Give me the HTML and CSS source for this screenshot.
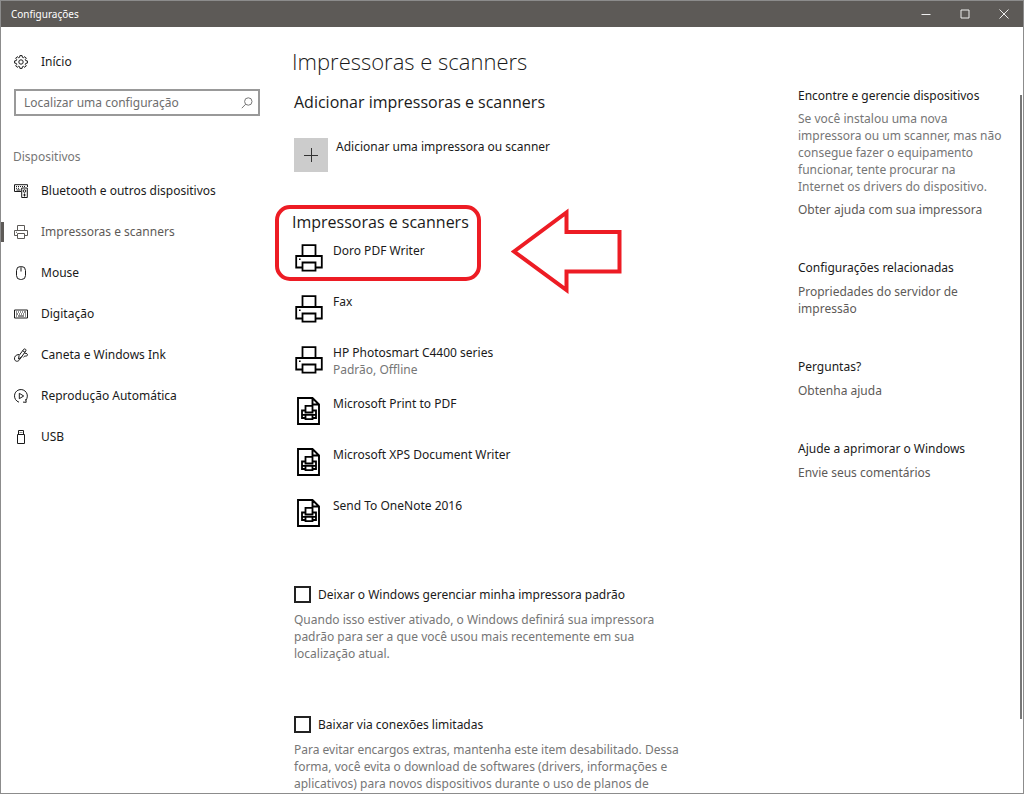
FILE: index.html
```html
<!DOCTYPE html>
<html lang="pt-BR">
<head>
<meta charset="utf-8">
<title>Configurações</title>
<link rel="stylesheet" href="styles.css">
</head>
<body>
<svg class="defs" aria-hidden="true">
  <symbol id="printer" viewBox="0 0 28 28">
    <g fill="none" stroke="currentColor" stroke-width="1.8">
      <path d="M7.5 12V1.2h13V12"/>
      <path d="M7.5 23.5H1.2V12h25.6v11.500h-6.300"/>
      <path d="M7.500 18.500h13v8.200h-13z"/>
    </g>
    <path d="M4 14.500h1.600v1.600H4z" fill="currentColor"/>
  </symbol>
  <symbol id="docprinter" viewBox="0 0 28 28">
    <g fill="none" stroke="currentColor">
      <path stroke-width="1.900" d="M3 1h14.500l6.500 6.500V27H3zM17.500 1v6.500H24"/>
      <path stroke-width="1.800" d="M10.500 15.500V8.800h7v6.700zM10.500 21H7V13.500h3.500M17.500 13.500H21V21h-3.500M7 17.800h14M10.500 18v4.200h7V18"/>
    </g>
  </symbol>
</svg>
<div class="window">
  <header class="titlebar">
    <span class="caption">Configurações</span>
    <div class="controls">
      <button class="control" type="button" aria-label="Minimizar"><svg width="10" height="10" viewBox="0 0 10 10"><path d="M0.500 5.500h9"/></svg></button>
      <button class="control" type="button" aria-label="Maximizar"><svg width="10" height="10" viewBox="0 0 10 10"><path d="M1 1h8v8H1z"/></svg></button>
      <button class="control" type="button" aria-label="Fechar"><svg width="10" height="10" viewBox="0 0 10 10"><path d="M0.500 0.500l9 9M9.500 0.500l-9 9"/></svg></button>
    </div>
  </header>
  <div class="body">
    <nav class="sidebar">
      <a class="item" href="#"><svg class="icon" viewBox="0 0 14 14"><circle cx="7" cy="7" r="2.200"/><path d="M5.900 0.600h2.200l.3 1.700 1 .4 1.400-1 1.500 1.500-1 1.400.4 1 1.700.3v2.200l-1.700.3-.4 1 1 1.400-1.500 1.500-1.400-1-1 .4-.3 1.700H5.900l-.3-1.700-1-.4-1.400 1-1.500-1.500 1-1.400-.4-1-1.700-.3V5.900l1.700-.3.4-1-1-1.400 1.500-1.500 1.400 1 1-.4z"/></svg>Início</a>
      <div class="search">
        <input class="query" type="text" aria-label="Localizar uma configuração" placeholder="Localizar uma configuração">
        <svg class="lens" viewBox="0 0 12 12"><circle cx="7.300" cy="4.500" r="3.700"/><path d="M4.700 7.200L0.800 11.200"/></svg>
      </div>
      <h2 class="group">Dispositivos</h2>
      <a class="item" href="#"><svg class="icon" viewBox="0 0 14 14"><path d="M7 7.500H0.500V0.700h13v2.300M2 2.500h1m1 0h1m1 0h1m1 0h1m1 0h1M2 4.300h1m1 0h1M2.500 6h4M7.700 4h5.600v9.500H7.700z"/><circle cx="10.500" cy="7" r="1.300"/><path d="M10.500 9.500v3M9.300 11h2.400"/></svg>Bluetooth e outros dispositivos</a>
      <a class="item current" href="#" aria-current="page"><svg class="icon" viewBox="0 0 14 14"><path d="M3.500 5.500V0.500h7v5M3.500 10.500h-3v-5h13v5h-3M3.500 8.500h7v5h-7zM2 7.300h1"/></svg>Impressoras e scanners</a>
      <a class="item" href="#"><svg class="icon" viewBox="0 0 14 14"><rect x="2.500" y="0.500" width="9" height="13" rx="4"/><path d="M7 1v4.500"/></svg>Mouse</a>
      <a class="item" href="#"><svg class="icon" viewBox="0 0 14 14"><path d="M0.500 3h13v8h-13z"/><path d="M2 5h1m1 0h1m1 0h1m1 0h1m1 0h2M2 7h2m1 0h1m1 0h1m1 0h1m1 0h1M2 9h1m1 0h6m1 0h1"/></svg>Digitação</a>
      <a class="item" href="#"><svg class="icon" viewBox="0 0 14 14"><path d="M4.500 11l.6-3.500 4.600-6.200c.9-1 2.900.2 2.200 1.500L7.500 9zM8.700 2.700l2.200 1.500M5 6.500C1.800 6.600.2 8.800.5 11c.3 2.700 3.800 3 4.900.8L7.800 8.500M10.500 5.300c3.300-.5 3.900 2.500 1.800 2.700-1.500.1-2.200.1-2.800 1.400"/></svg>Caneta e Windows Ink</a>
      <a class="item" href="#"><svg class="icon" viewBox="0 0 14 14"><path d="M5 13.200C-1.200 11-.8 2.500 5 .8c6-1.700 11 5 6.800 10.600M9 13.100l3.200.2-.4-3.200M5.300 4.300v5.400L9.700 7z"/></svg>Reprodução Automática</a>
      <a class="item" href="#"><svg class="icon" viewBox="0 0 14 14"><path d="M3.500 4.500h7v9h-7zM4.500 4.500v-4h5v4M5.700 2.500h.8m1 0h.8"/></svg>USB</a>
    </nav>
    <main class="content">
      <h1 class="title">Impressoras e scanners</h1>
      <h2 class="heading">Adicionar impressoras e scanners</h2>
      <button class="add" type="button"><span class="plus"><svg width="14" height="14" viewBox="0 0 14 14"><path d="M0 7.500h14M7.500 0v14"/></svg></span><span>Adicionar uma impressora ou scanner</span></button>
      <section class="printers">
        <h2 class="heading">Impressoras e scanners</h2>
        <ul class="list">
          <li class="printer"><svg class="device"><use href="#printer"/></svg><span>Doro PDF Writer</span></li>
          <li class="printer"><svg class="device"><use href="#printer"/></svg><span>Fax</span></li>
          <li class="printer"><svg class="device"><use href="#printer"/></svg><span>HP Photosmart C4400 series<br><span class="status">Padrão, Offline</span></span></li>
          <li class="printer"><svg class="device"><use href="#docprinter"/></svg><span>Microsoft Print to PDF</span></li>
          <li class="printer"><svg class="device"><use href="#docprinter"/></svg><span>Microsoft XPS Document Writer</span></li>
          <li class="printer"><svg class="device"><use href="#docprinter"/></svg><span>Send To OneNote 2016</span></li>
        </ul>
        <div class="highlight"></div>
        <svg class="arrow" viewBox="0 0 112 86"><path d="M3 43.500L55.500 4.500V24H108.500V63.500H55.500V82z"/></svg>
      </section>
      <div class="option">
        <label class="check"><input class="box" type="checkbox">Deixar o Windows gerenciar minha impressora padrão</label>
        <p class="note">Quando isso estiver ativado, o Windows definirá sua impressora padrão para ser a que você usou mais recentemente em sua localização atual.</p>
      </div>
      <div class="option">
        <label class="check"><input class="box" type="checkbox">Baixar via conexões limitadas</label>
        <p class="note">Para evitar encargos extras, mantenha este item desabilitado. Dessa forma, você evita o download de softwares (drivers, informações e aplicativos) para novos dispositivos durante o uso de planos de</p>
      </div>
    </main>
    <aside class="help">
      <section class="topic">
        <h3 class="subject">Encontre e gerencie dispositivos</h3>
        <p class="text">Se você instalou uma nova impressora ou um scanner, mas não consegue fazer o equipamento funcionar, tente procurar na Internet os drivers do dispositivo.</p>
        <a class="link" href="#">Obter ajuda com sua impressora</a>
      </section>
      <section class="topic">
        <h3 class="subject">Configurações relacionadas</h3>
        <a class="link" href="#">Propriedades do servidor de impressão</a>
      </section>
      <section class="topic">
        <h3 class="subject">Perguntas?</h3>
        <a class="link" href="#">Obtenha ajuda</a>
      </section>
      <section class="topic">
        <h3 class="subject">Ajude a aprimorar o Windows</h3>
        <a class="link" href="#">Envie seus comentários</a>
      </section>
    </aside>
    <div class="scrollbar"></div>
  </div>
</div>
</body>
</html>
```
FILE: styles.css
```css
* { box-sizing: border-box; }
body, h1, h2, h3, p, ul { margin: 0; padding: 0; }
body { font: 12px/17px "Noto Sans", "Open Sans", sans-serif; color: #1a1a1a; background: #fff; }
h1, h2, h3 { font-size: 12px; font-weight: 400; }
a { color: inherit; text-decoration: none; }
button, input { font: inherit; color: inherit; }
.defs { display: none; }
.window { display: flex; flex-direction: column; height: 100vh; border: 1px solid #8c8c8c; overflow: hidden; }
.titlebar { display: flex; flex: none; justify-content: space-between; align-items: center; height: 26px; padding-left: 10px; background: #5d5a57; color: #fff; font-size: 10px; }
.controls { display: flex; height: 100%; }
.control { display: grid; place-items: center; width: 39px; padding: 0; border: 0; background: none; }
.control svg { fill: none; stroke: #eee; }
.body { position: relative; display: grid; grid-template-columns: 275px minmax(0, 1fr) 225px; flex: 1; min-height: 0; overflow: hidden; }
.sidebar { padding-top: 14px; }
.item { display: flex; align-items: center; gap: 13px; height: 41px; padding-left: 13px; }
.icon { flex: none; width: 14px; height: 14px; fill: none; stroke: currentColor; }
.current { color: #5d5a57; background: linear-gradient(#5d5a57, #5d5a57) left center / 3px 20px no-repeat; }
.search { display: flex; align-items: center; height: 27px; margin: 7px 16px 0 13px; padding: 0 5px 0 8px; border: 2px solid #999; }
.query { flex: 1; min-width: 0; padding: 0; border: 0; outline: 0; background: none; }
.query::placeholder { color: #6e6e6e; opacity: 1; }
.lens { width: 12px; height: 12px; fill: none; stroke: #777; }
.group { margin: 32px 0 5px 12px; color: #767676; }
.content { padding: 19px 0 0 18px; }
.title { margin-left: -2px; font: 300 22px/30px "Open Sans", "Noto Sans", sans-serif; }
.heading { font: 16px/22px "Open Sans", "Noto Sans", sans-serif; }
.title + .heading { margin-top: 15px; }
.add { display: flex; gap: 8px; margin-top: 25px; padding: 0; border: 0; background: none; text-align: left; }
.plus { display: grid; place-items: center; width: 34px; height: 34px; background: #ccc; }
.plus svg { stroke: #333; }
.printers { position: relative; margin-top: 39px; }
.printers .heading { margin-left: -2px; }
.list { list-style: none; margin-top: 9px; }
.printer { display: flex; gap: 10px; height: 51px; padding-left: 1px; }
.device { flex: none; width: 28px; height: 28px; margin-top: 2px; color: #000; }
.status, .note, .text { color: #767676; }
.highlight { position: absolute; left: -19px; top: -6px; width: 206px; height: 76px; border: 4px solid #ed1c24; border-radius: 15px; }
.arrow { position: absolute; left: 217px; top: -3px; width: 112px; height: 86px; fill: none; stroke: #ed1c24; stroke-width: 4px; }
.option { margin-top: 38px; }
.option + .option { margin-top: 54px; }
.check { display: flex; align-items: center; gap: 7px; }
.box { appearance: none; width: 17px; height: 17px; margin: 0; border: 2px solid #222; background: #fff; }
.note { max-width: 392px; margin-top: 8px; }
.help { padding: 60px 20px 0 0; }
.topic { margin-bottom: 41px; }
.text, .link { display: block; margin-top: 6px; }
.subject + .link { margin-top: 7px; }
.link { color: #5d5a57; }
.scrollbar { position: absolute; right: 1px; top: 68px; bottom: 74px; width: 2px; background: #767676; }
```
